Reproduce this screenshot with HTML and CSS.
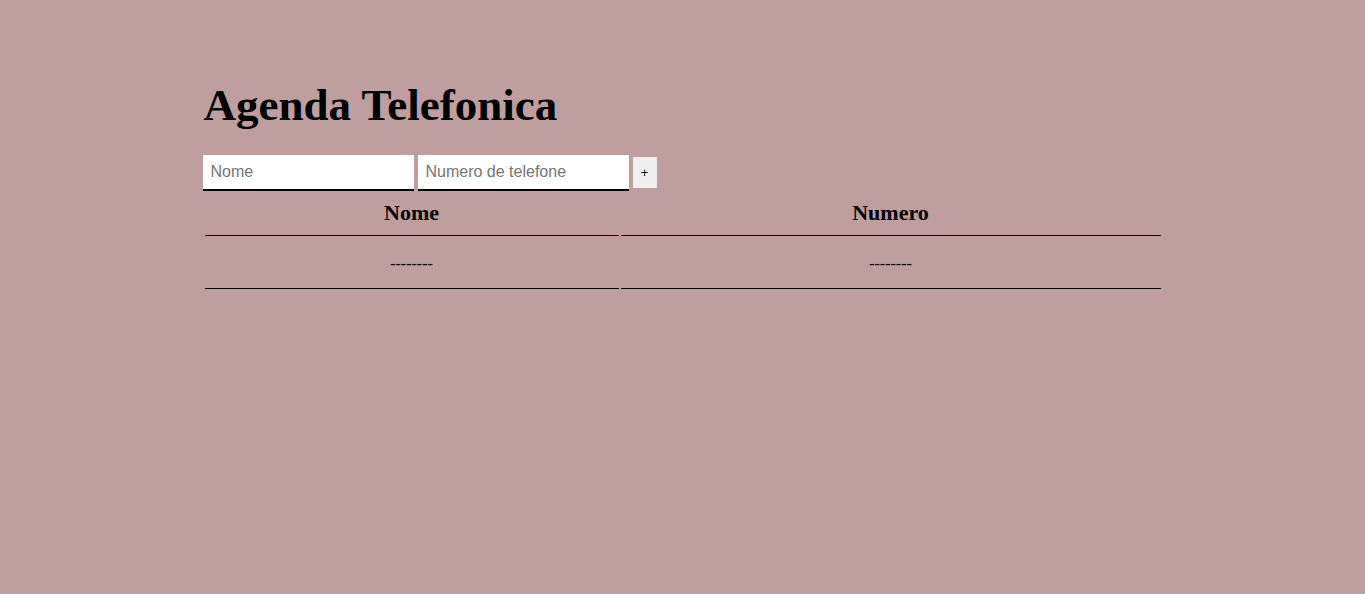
FILE: index.html
```html
<!DOCTYPE html>
<html lang="pt">
<head>
<meta charset="utf-8">
<title>Agenda Telefonica</title>
<link rel="stylesheet" href="styles.css">
</head>
<body>
<main class="container">
  <h1 class="title">Agenda Telefonica</h1>
  <form class="form">
    <input class="field" type="text" placeholder="Nome">
    <input class="field" type="tel" placeholder="Numero de telefone">
    <button class="add" type="button">+</button>
  </form>
  <table class="table">
    <thead>
      <tr><th class="col-name">Nome</th><th>Numero</th></tr>
    </thead>
    <tbody>
      <tr><td>--------</td><td>--------</td></tr>
    </tbody>
  </table>
</main>
</body>
</html>
```
FILE: styles.css
```css
html, body {
  margin: 0;
  padding: 0;
  background: #bf9ea0;
  font-family: "Liberation Serif", "Times New Roman", serif;
}
.container {
  width: 960px;
  margin: 0 auto;
  padding-top: 79px;
}
.title {
  font-size: 45px;
  font-weight: bold;
  margin: 0 0 24px 1px;
  line-height: 52px;
}
.form {
  display: flex;
  align-items: center;
  gap: 4px;
  height: 36px;
}
.field {
  width: 211px;
  height: 36px;
  box-sizing: border-box;
  border: none;
  border-bottom: 2px solid #000;
  background: #fff;
  padding: 0 8px;
  font-family: "Liberation Sans", Arial, sans-serif;
  font-size: 16px;
  outline: none;
}
.field::placeholder { color: #757575; }
.add {
  width: 24px;
  height: 31px;
  margin-top: -1px;
  border: none;
  background: #efefef;
  font-family: "Liberation Sans", Arial, sans-serif;
  font-size: 13px;
  padding: 0;
}
.table {
  width: 960px;
  margin-top: 5px;
  border-collapse: separate;
  border-spacing: 2px;
}
.table th {
  font-size: 22px;
  font-weight: bold;
  height: 29px;
  padding: 0 0 8px;
  border-bottom: 1px solid #000;
  text-align: center;
}
.table .col-name { width: 414px; }
.table td {
  font-size: 16px;
  height: 48px;
  padding: 2px 0 0;
  border-bottom: 1px solid #000;
  text-align: center;
}
```
